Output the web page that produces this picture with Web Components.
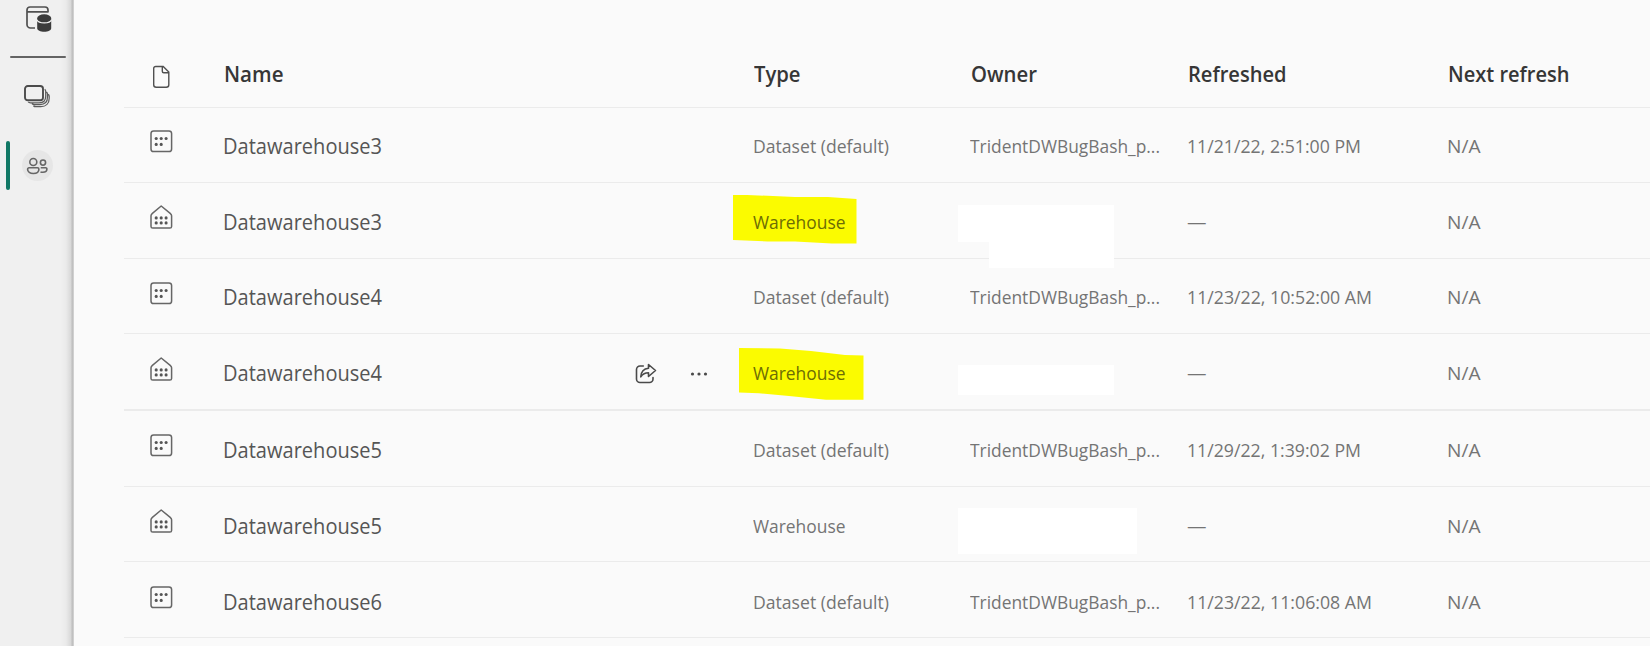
<!DOCTYPE html>
<html lang="en">
<head>
<meta charset="utf-8">
<title>Workspace items</title>
<style>
html,body{margin:0;height:100%;overflow:hidden;background:#fafafa}
body{font-family:"Open Sans","Noto Sans",sans-serif;color:#666}
</style>
</head>
<body>
<app-shell>
  <side-nav slot="nav"></side-nav>
  <item-table></item-table>
</app-shell>
<script>
const ICONS = {
  datahub: [30,30,`<path d="M12 23H7.500a3.500 3.500 0 0 1-3.500-3.500V5a3 3 0 0 1 3-3h15a3 3 0 0 1 3 3v2.500M4 6.800h21" fill="none" stroke="#505050" stroke-width="1.700"/><path d="M14.200 13.200v10c0 2 3.200 3.500 7 3.500s7-1.500 7-3.500v-10z" fill="#3b3b3b"/><ellipse cx="21.200" cy="13" rx="7" ry="3.700" fill="#3b3b3b"/><path d="M13.800 14.700c1 2.200 4 3.200 7.400 3.200s6.400-1 7.400-3.200" fill="none" stroke="#f0f0f0" stroke-width="1.300"/>`],
  layers: [30,26,`<rect x="3" y="2" width="18" height="14.300" rx="2.800" fill="none" stroke="#4b4b4b" stroke-width="1.900"/><path d="M22.700 5.300c.8.600 1 1.300 1 2.200v4.800c0 4-2.500 6.500-6.500 6.500H8.500c-1.200 0-1.800-.3-2.300-.9M24.500 8c.7.600 1 1.200 1 2.100v3c0 4.700-2.800 7.500-7.500 7.500h-5.500c-1.200 0-2-.4-2.600-1M26.300 10.300c.6.600.9 1.200.9 2v1.900c0 5.200-3.200 8.500-8.400 8.500H14c-1.100 0-2-.4-2.600-1" fill="none" stroke="#5b5b5b" stroke-width="1.250"/>`],
  people: [22,20,`<g fill="none" stroke="#666" stroke-width="1.600"><circle cx="7.300" cy="6" r="3.500"/><circle cx="17" cy="6.600" r="2.600"/><path d="M3 11.800h8.500a1.400 1.400 0 0 1 1.400 1.400c0 2.900-2.400 4.300-5.600 4.300s-5.700-1.400-5.700-4.300A1.400 1.400 0 0 1 3 11.800zM14.700 11.800h5a1.200 1.200 0 0 1 1.200 1.200c0 2.300-1.800 3.300-4 3.300-.9 0-1.700-.1-2.400-.4"/></g>`],
  file: [22,24,`<path d="M5.700 1.500h7.500l5.600 5.500v12.700a2.500 2.500 0 0 1-2.500 2.500H6.200a2.500 2.500 0 0 1-2.500-2.500V3.500a2 2 0 0 1 2-2zM12.300 1.500v4.800a1.500 1.500 0 0 0 1.500 1.500h5" fill="none" stroke="#505050" stroke-width="1.400"/>`],
  dataset: [23,24,`<rect x="1" y="1" width="20.600" height="20.600" rx="2.600" fill="none" stroke="#666" stroke-width="1.500"/><g fill="#555"><circle cx="6.200" cy="8.500" r="1.550"/><circle cx="11.200" cy="8.500" r="1.550"/><circle cx="16.100" cy="8.500" r="1.550"/><circle cx="6.200" cy="14.400" r="1.550"/><circle cx="11.200" cy="14.400" r="1.550"/></g>`],
  warehouse: [23,24,`<path d="M11.200 1l9 7.300c1 .8 1.400 1.400 1.400 2.500v10.600c0 1-.7 1.700-1.700 1.700H2.700C1.700 23.100 1 22.400 1 21.400V10.800c0-1.100.4-1.700 1.400-2.500z" fill="none" stroke="#666" stroke-width="1.500" stroke-linejoin="round"/><g fill="#555"><circle cx="6.200" cy="12.900" r="1.550"/><circle cx="11.200" cy="12.900" r="1.550"/><circle cx="16.100" cy="12.900" r="1.550"/><circle cx="6.200" cy="17.900" r="1.550"/><circle cx="11.200" cy="17.900" r="1.550"/><circle cx="16.100" cy="17.900" r="1.550"/></g>`],
  share: [22,22,`<g fill="none" stroke="#4a4a4a" stroke-width="1.600" stroke-linejoin="round" stroke-linecap="round"><path d="M8.300 3H5a3.500 3.500 0 0 0-3.500 3.500V16A3.500 3.500 0 0 0 5 19.500h9.500A3.500 3.500 0 0 0 18 16v-1.500"/><path d="M13.500 1.500l7 6-7 6v-3.700c-3.700 0-5.700 1.100-7.700 4 .3-5 3-8.200 7.700-8.600z"/></g>`],
  more: [18,6,`<g fill="#4a4a4a"><circle cx="2.500" cy="3" r="1.600"/><circle cx="9" cy="3" r="1.600"/><circle cx="15.500" cy="3" r="1.600"/></g>`]
};

customElements.define('ui-icon', class extends HTMLElement {
  connectedCallback() {
    const [w,h,body] = ICONS[this.getAttribute('name')];
    this.attachShadow({mode:'open'}).innerHTML =
      `<style>:host{display:block;flex:none;width:${w}px;height:${h}px}svg{display:block}</style>
       <svg width="${w}" height="${h}" viewBox="0 0 ${w} ${h}">${body}</svg>`;
  }
});

/* One line of text condensed or widened to a fixed measure. */
customElements.define('fit-text', class extends HTMLElement {
  connectedCallback() {
    this.attachShadow({mode:'open'}).innerHTML =
      `<style>:host{display:block;white-space:nowrap}span{display:inline-block;transform-origin:0 50%}</style><span><slot></slot></span>`;
    const span = this.shadowRoot.querySelector('span');
    const w = +this.getAttribute('measure');
    if (w) span.style.transform = `scaleX(${w / span.getBoundingClientRect().width})`;
  }
});

customElements.define('app-shell', class extends HTMLElement {
  connectedCallback() {
    this.attachShadow({mode:'open'}).innerHTML =
      `<style>:host{display:flex;height:646px;overflow:hidden}main{flex:1;min-width:0;padding:40px 0 0 50px}</style>
       <slot name="nav"></slot><main><slot></slot></main>`;
  }
});

customElements.define('side-nav', class extends HTMLElement {
  connectedCallback() {
    this.attachShadow({mode:'open'}).innerHTML = `
      <style>
        :host{display:flex;flex-direction:column;box-sizing:border-box;flex:none;width:74px;height:646px;
          background:linear-gradient(90deg,rgba(0,0,0,0) 60px,rgba(0,0,0,.025) 66px,rgba(0,0,0,.10) 71px,rgba(0,0,0,.21) 72px,rgba(0,0,0,.19) 73px,rgba(0,0,0,.08) 74px),#f0f0f0}
        .hub{padding:5px 0 0 23px;height:51px;box-sizing:border-box}
        hr{width:56px;height:2px;border:0;margin:5px 0 0 9.500px;background:#646464;border-radius:1px}
        .layers{padding:26px 0 0 22px}
        .active{display:flex;align-items:center;height:49px;margin-top:31px;padding-left:6px}
        .bar{width:4px;height:49px;border-radius:2px;background:#117865}
        .disc{display:flex;align-items:center;justify-content:center;width:31px;height:31px;border-radius:50%;background:#e6e6e6;margin-left:11.500px}
      </style>
      <div class="hub"><ui-icon name="datahub"></ui-icon></div>
      <hr>
      <div class="layers"><ui-icon name="layers"></ui-icon></div>
      <div class="active"><div class="bar"></div><div class="disc"><ui-icon name="people"></ui-icon></div></div>`;
  }
});

const COLS = '100px 528px 217.500px 217px 260px 1fr';

customElements.define('table-head', class extends HTMLElement {
  connectedCallback() {
    this.attachShadow({mode:'open'}).innerHTML = `
      <style>
        :host{display:grid;grid-template-columns:${COLS};height:68px;box-sizing:border-box;border-bottom:1px solid #ebebeb;
          font-size:20.800px;font-weight:600;line-height:28px;color:#363636;padding-top:20px}
        ui-icon{margin:4.500px 0 0 26px}
        fit-text{padding-left:1px}
        .type{padding-left:2px}
        .name{padding-left:.3px}
      </style>
      <ui-icon name="file"></ui-icon>
      <fit-text class="name" measure="59.500">Name</fit-text><fit-text class="type" measure="46.500">Type</fit-text>
      <fit-text measure="66">Owner</fit-text><fit-text measure="98.500">Refreshed</fit-text>
      <fit-text measure="121.500">Next refresh</fit-text>`;
  }
});

customElements.define('table-item', class extends HTMLElement {
  connectedCallback() {
    const a = n => this.getAttribute(n);
    const wh = a('kind') === 'warehouse';
    const marks = {
      a: '0,2 14,2 40,3 62,4 95,4 123.500,6 123.500,50.500 99,50.500 62,48.500 35,48.500 0,47',
      b: '0,3 41,3.500 72,6 106,10 124.500,10.500 124.500,54.700 87,54.700 50,51 20,48.300 0,47.500'
    };
    const m = a('mark');
    this.attachShadow({mode:'open'}).innerHTML = `
      <style>
        :host{display:grid;position:relative;grid-template-columns:${COLS};height:${a('h')}px;box-sizing:border-box;
          border-bottom:${a('line') || 1}px solid #ebebeb;--dy:${a('dy') || 0}px;--di:${a('di') || 0}px}
        :host>*{min-width:0}
        .icon{padding:calc(22px + var(--di)) 0 0 25.800px}
        .name,.cell{padding-top:calc(25px + var(--dy));line-height:28px;font-size:19px;color:#747474;position:relative}
        .name{display:flex;font-size:21px;color:#555}
        .name fit-text{width:411px;margin-left:-.6px}
        .name .more{margin:11.500px 0 0 33px}
        .name .share{margin:3.500px 0 0 .6px}
        .type fit-text{position:relative;padding-left:.7px}
        .mark{position:absolute;overflow:visible;left:${m === 'b' ? -13.500 : -19}px;top:${m === 'b' ? 10.500 : 10}px}
        .hot{color:#6d6d05}
        .cover{position:absolute;background:#fff;z-index:1}
      </style>
      <div class="icon"><ui-icon name="${a('kind')}"></ui-icon></div>
      <div class="name"><fit-text measure="159">${a('name')}</fit-text>
        ${this.hasAttribute('actions') ? '<ui-icon class="share" name="share"></ui-icon><ui-icon class="more" name="more"></ui-icon>' : ''}</div>
      <div class="cell type ${m ? 'hot' : ''}">
        ${m ? `<svg class="mark" width="125" height="56"><polygon points="${marks[m]}" fill="#fbfb00"/></svg>` : ''}
        <fit-text measure="${wh ? 92.5 : 136}">${wh ? 'Warehouse' : 'Dataset (default)'}</fit-text></div>
      <div class="cell">${wh ? (a('cover') || '').split(';').map(c => {
          const [x,y,w,h] = c.split(',');
          return `<div class="cover" style="left:${x}px;top:${y}px;width:${w}px;height:${h}px"></div>`;
        }).join('') : '<fit-text measure="190">TridentDWBugBash_p...</fit-text>'}</div>
      <div class="cell"><fit-text measure="${wh ? 19.5 : a('dw')}">${wh ? '—' : a('date')}</fit-text></div>
      <div class="cell"><fit-text measure="33.500">N/A</fit-text></div>`;
  }
});

customElements.define('item-table', class extends HTMLElement {
  connectedCallback() {
    this.attachShadow({mode:'open'}).innerHTML = `
      <style>:host{display:block}</style>
      <table-head></table-head>
      <table-item h="75" dy="-1" di="0.3" kind="dataset" name="Datawarehouse3" date="11/21/22, 2:51:00 PM" dw="174"></table-item>
      <table-item h="76" kind="warehouse" name="Datawarehouse3" mark="a" cover="-11.500,22,155.500,37;19.500,58,124.500,27"></table-item>
      <table-item h="75" dy="-1" di="0.8" kind="dataset" name="Datawarehouse4" date="11/23/22, 10:52:00 AM" dw="185"></table-item>
      <table-item h="77" line="2" di="0.5" kind="warehouse" name="Datawarehouse4" mark="b" actions cover="-11.500,31,155.500,29.500"></table-item>
      <table-item h="76" dy="0" di="0.8" kind="dataset" name="Datawarehouse5" date="11/29/22, 1:39:02 PM" dw="174"></table-item>
      <table-item h="75" kind="warehouse" name="Datawarehouse5" cover="-11.500,20.500,179,46.500"></table-item>
      <table-item h="76" dy="1" di="2" kind="dataset" name="Datawarehouse6" date="11/23/22, 11:06:08 AM" dw="185"></table-item>`;
  }
});
</script>
</body>
</html>
